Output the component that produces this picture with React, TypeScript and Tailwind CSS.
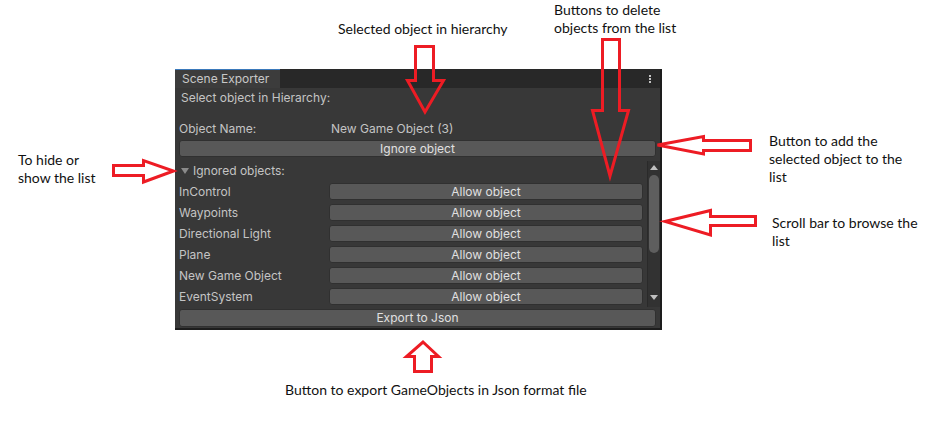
const items = ["InControl", "Waypoints", "Directional Light", "Plane", "New Game Object", "EventSystem"];

function UnityButton({ label, className = "" }: { label: string; className?: string }) {
  return (
    <div
      className={`flex h-[17px] items-center justify-center rounded-[3px] border border-[#303030] bg-[#585858] text-[12px] leading-none text-[#e0e0e0] ${className}`}
    >
      {label}
    </div>
  );
}

function Arrows() {
  return (
    <svg className="pointer-events-none absolute inset-0" width="951" height="421" viewBox="0 0 951 421">
      <g fill="none" stroke="#ed1c24" strokeWidth="3" strokeLinejoin="miter">
        {/* selected object */}
        <polygon points="415.5,46.5 433.5,46.5 433.5,80.5 443.5,80.5 425,112 407.5,80.5 415.5,80.5" />
        {/* delete buttons */}
        <polygon points="602.5,39.5 619.5,39.5 619.5,110.5 628.5,110.5 610,176 592.5,110.5 602.5,110.5" />
        {/* add button */}
        <polygon points="657.5,145 703.5,136.5 703.5,140.5 750.5,140.5 750.5,150.5 703.5,150.5 703.5,154" />
        {/* scroll bar */}
        <polygon points="665,221.5 710.5,210.5 710.5,216.5 755.5,216.5 755.5,225.5 710.5,225.5 710.5,235" />
        {/* hide/show */}
        <polygon points="113.5,165.5 143.5,165.5 143.5,160.5 173.5,171 143.5,182 143.5,175.5 113.5,175.5" />
        {/* export */}
        <polygon points="423,342 438.5,356.5 431.5,356.5 431.5,371.5 414.5,371.5 414.5,356.5 406.5,356.5" />
      </g>
    </svg>
  );
}

function Note({ lines, className }: { lines: string[]; className: string }) {
  return (
    <div className={`absolute text-[14px] leading-[18px] text-[#111] ${className}`} style={{ fontFamily: "Lato, 'Open Sans', sans-serif" }}>
      {lines.map((l) => (
        <div key={l}>{l}</div>
      ))}
    </div>
  );
}

export default function App() {
  return (
    <div className="relative h-[421px] w-[951px] overflow-hidden bg-white pl-[175px] pt-[69px]" style={{ fontFamily: "Inter, 'Noto Sans', sans-serif" }}>
      <div className="flex h-[261px] w-[487px] flex-col border-r-2 border-b-2 border-[#1d1d1d] bg-[#383838]">
        {/* tab strip */}
        <div className="flex h-[19px] items-stretch bg-[#282828]">
          <div className="flex w-[105px] items-center border-t border-[#3a79bb] bg-[#3c3c3c] pl-[7px] text-[12px] text-[#c8c8c8]">
            Scene Exporter
          </div>
          <div className="flex-1" />
          <div className="flex w-[14px] flex-col items-center justify-center gap-[1px] mr-[3px]">
            <span className="h-[2px] w-[2px] bg-[#c4c4c4]" />
            <span className="h-[2px] w-[2px] bg-[#c4c4c4]" />
            <span className="h-[2px] w-[2px] bg-[#c4c4c4]" />
          </div>
        </div>

        <div className="mt-[2px] flex h-[16px] items-center pl-[6px] text-[12px] text-[#c4c4c4]">Select object in Hierarchy:</div>

        <div className="mt-[15px] flex h-[16px] items-center pl-[4px] text-[12px] text-[#c4c4c4]">
          <span className="w-[152px]">Object Name:</span>
          <span>New Game Object (3)</span>
        </div>

        <div className="mt-[3px] px-[4px]">
          <UnityButton label="Ignore object" />
        </div>

        {/* scroll view */}
        <div className="mt-[4px] flex h-[146px]">
          <div className="flex flex-1 flex-col pl-[4px] pr-[4px]">
            <div className="mt-[2px] flex h-[16px] items-center text-[12px] text-[#c4c4c4]">
              <svg width="10" height="8" viewBox="0 0 10 8" className="ml-[1px] mr-[3px]">
                <polygon points="1,1 9,1 5,7" fill="#8a8a8a" />
              </svg>
              Ignored objects:
            </div>
            {items.map((name) => (
              <div key={name} className="mt-[4px] flex h-[17px] items-center text-[12px] text-[#c4c4c4]">
                <span className="w-[150px] shrink-0">{name}</span>
                <UnityButton label="Allow object" className="flex-1" />
              </div>
            ))}
          </div>
          <div className="flex w-[13px] flex-col items-center border-l border-[#2a2a2a] bg-[#323232]">
            <svg width="8" height="5" viewBox="0 0 8 5" className="mt-[4px]">
              <polygon points="0,5 8,5 4,0" fill="#c0c0c0" />
            </svg>
            <div className="mt-[5px] h-[78px] w-[10px] rounded-full bg-[#5e5e5e]" />
            <div className="flex-1" />
            <svg width="8" height="5" viewBox="0 0 8 5" className="mb-[7px]">
              <polygon points="0,0 8,0 4,5" fill="#c0c0c0" />
            </svg>
          </div>
        </div>

        <div className="mt-[2px] px-[4px]">
          <UnityButton label="Export to Json" className="h-[18px]" />
        </div>
      </div>

      <Note lines={["Selected object in hierarchy"]} className="left-[338px] top-[20px]" />
      <Note lines={["Buttons to delete", "objects from the list"]} className="left-[554px] top-[1px]" />
      <Note lines={["To hide or", "show the list"]} className="left-[18px] top-[151px]" />
      <Note lines={["Button to add the", "selected object to the", "list"]} className="left-[769px] top-[132px]" />
      <Note lines={["Scroll bar to browse the", "list"]} className="left-[772px] top-[214px]" />
      <Note lines={["Button to export GameObjects in Json format file"]} className="left-[285px] top-[381px]" />

      <Arrows />
    </div>
  );
}
